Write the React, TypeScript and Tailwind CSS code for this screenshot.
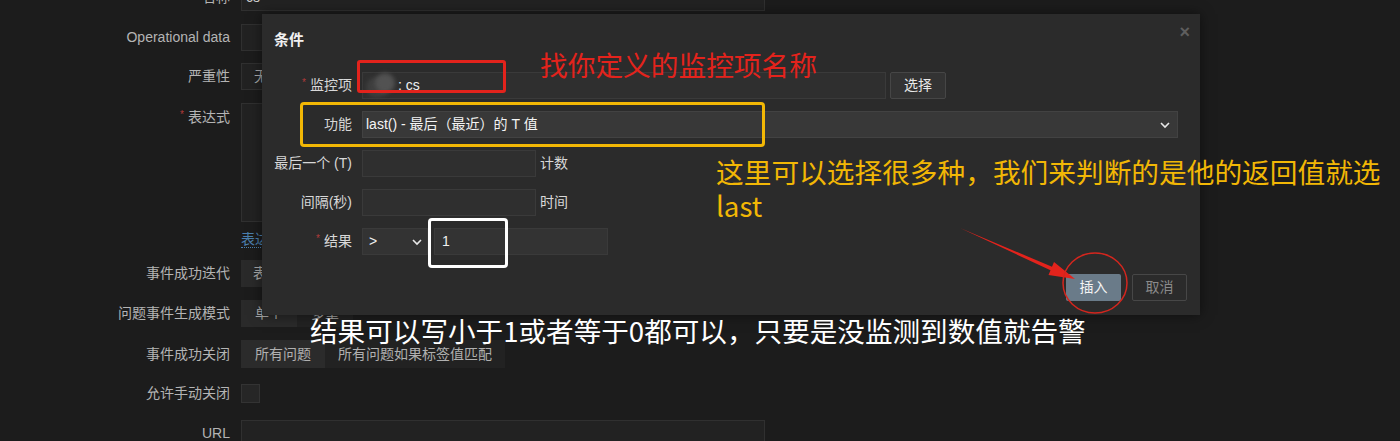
import type { ReactNode } from "react";

const FONT = "font-['Liberation_Sans','Noto_Sans_CJK_SC',sans-serif]";
const CJK = "font-['Noto_Sans_CJK_SC','Liberation_Sans',sans-serif]";

function FormRow({ label, required, children, className = "" }: { label: string; required?: boolean; children: ReactNode; className?: string }) {
  return (
    <div className={`flex items-center gap-[11px] ${className}`}>
      <div className="w-[230px] text-right text-[14px] text-[#b4b4b4] shrink-0">
        {required && <span className="text-[#b03a3a] text-[10px] mr-1 align-top">*</span>}
        {label}
      </div>
      {children}
    </div>
  );
}

function DialogRow({ label, required, children }: { label: string; required?: boolean; children: ReactNode }) {
  return (
    <div className="flex items-center gap-[10px] h-[27px]">
      <div className="w-[90px] text-right text-[14px] text-[#d8d8d8] shrink-0 whitespace-nowrap">
        {required && <span className="text-[#b03a3a] text-[10px] mr-1 align-top">*</span>}
        {label}
      </div>
      {children}
    </div>
  );
}

function Chevron() {
  return (
    <svg width="12" height="12" viewBox="0 0 12 12" className="shrink-0">
      <path d="M2 4 L6 8 L10 4" fill="none" stroke="#e8e8e8" strokeWidth="1.6" />
    </svg>
  );
}

export default function App() {
  return (
    <div className={`relative w-[1400px] h-[441px] overflow-hidden bg-[#1c1c1c] ${FONT}`}>
      {/* Background form */}
      <div className="flex flex-col">
        <FormRow label="名称" className="mt-[-16px]">
          <div className="w-[524px] h-[27px] bg-[#222] border border-[#303030] text-[14px] text-[#ccc] px-1 flex items-center">cs</div>
        </FormRow>
        <FormRow label="Operational data" className="mt-[13px]">
          <div className="w-[524px] h-[27px] bg-[#222] border border-[#303030]" />
        </FormRow>
        <FormRow label="严重性" className="mt-[12px]">
          <div className="w-[524px] h-[27px] bg-[#222] border border-[#303030] text-[14px] text-[#aaa] px-[12px] flex items-center">无</div>
        </FormRow>
        <div className="flex gap-[11px] mt-[13px]">
          <div className="w-[230px] text-right text-[14px] text-[#b4b4b4] pt-[4px]">
            <span className="text-[#b03a3a] text-[10px] mr-1 align-top">*</span>表达式
          </div>
          <div className="w-[524px] h-[119px] bg-[#222] border border-[#303030]" />
        </div>
        <div className="flex gap-[11px] mt-[10px] h-[16px] items-center">
          <div className="w-[230px]" />
          <span className="text-[14px] text-[#4b7fae] border-b border-dotted border-[#4b7fae] leading-[15px]">表达式构造器</span>
        </div>
        <FormRow label="事件成功迭代" className="mt-[12px]">
          <div className="flex h-[27px] text-[14px] text-[#aaa]">
            <div className="px-[12px] bg-[#2a2a2a] flex items-center">表达式</div>
            <div className="px-[12px] bg-[#222] flex items-center">恢复表达式</div>
          </div>
        </FormRow>
        <FormRow label="问题事件生成模式" className="mt-[13px]">
          <div className="flex h-[27px] text-[14px] text-[#aaa]">
            <div className="px-[14px] bg-[#2a2a2a] flex items-center">单个</div>
            <div className="px-[14px] bg-[#222] flex items-center">多重</div>
          </div>
        </FormRow>
        <FormRow label="事件成功关闭" className="mt-[13px]">
          <div className="flex h-[28px] text-[14px] text-[#b0b0b0]">
            <div className="w-[84px] bg-[#2b2b2b] flex items-center justify-center">所有问题</div>
            <div className="w-[180px] bg-[#222] flex items-center justify-center">所有问题如果标签值匹配</div>
          </div>
        </FormRow>
        <FormRow label="允许手动关闭" className="mt-[12px]">
          <div className="h-[27px] flex items-center">
            <div className="w-[19px] h-[19px] bg-[#262626] border border-[#333]" />
          </div>
        </FormRow>
        <FormRow label="URL" className="mt-[13px]">
          <div className="w-[524px] h-[27px] bg-[#222] border border-[#303030]" />
        </FormRow>
      </div>

      {/* Dialog */}
      <div className="absolute left-[262px] top-[14px] w-[938px] h-[301px] bg-[#2b2b2b] shadow-[0_0_12px_rgba(0,0,0,0.5)] flex flex-col">
        <div className="flex items-start justify-between pl-[12px] pr-[10px] pt-[15px] h-[58px]">
          <span className="text-[15px] font-bold text-[#f0f0f0]">条件</span>
          <span className="text-[18px] leading-[10px] font-bold text-[#5e5e5e] mt-[-2px]">×</span>
        </div>
        <div className="flex flex-col gap-[12px]">
          <DialogRow label="监控项" required>
            <div className="relative w-[524px] h-[27px] bg-[#2f2f2f] border border-[#3a3a3a] flex items-center text-[14px] text-[#f0f0f0]">
              <div className="relative ml-[3px] w-[30px] h-[25px]">
                <div className="absolute left-0 top-[4px] w-[22px] h-[20px] rounded-full bg-[#3f3f3f] blur-[2px]" />
                <div className="absolute left-[9px] top-0 w-[20px] h-[20px] rounded-full bg-[#525252] blur-[2px]" />
              </div>
              <span className="ml-[2px]">: cs</span>
            </div>
            <div className="w-[56px] h-[27px] ml-[-6px] bg-[#333] border border-[#464646] rounded-[2px] text-[14px] text-[#e8e8e8] flex items-center justify-center">选择</div>
          </DialogRow>
          <DialogRow label="功能">
            <div className="w-[816px] h-[27px] bg-[#383838] border border-[#424242] flex items-center justify-between pl-[3px] pr-[6px] text-[14px] text-[#f4f4f4]">
              <span>last() - 最后（最近）的 T 值</span>
              <Chevron />
            </div>
          </DialogRow>
          <DialogRow label="最后一个 (T)">
            <div className="w-[174px] h-[27px] bg-[#2f2f2f] border border-[#3a3a3a]" />
            <span className="ml-[-6px] text-[14px] text-[#d8d8d8]">计数</span>
          </DialogRow>
          <DialogRow label="间隔(秒)">
            <div className="w-[174px] h-[27px] bg-[#2f2f2f] border border-[#3a3a3a]" />
            <span className="ml-[-6px] text-[14px] text-[#d8d8d8]">时间</span>
          </DialogRow>
          <DialogRow label="结果" required>
            <div className="w-[66px] h-[27px] bg-[#333] border border-[#3a3a3a] flex items-center justify-between pl-[6px] pr-[4px] text-[14px] text-[#f0f0f0]">
              <span>&gt;</span>
              <Chevron />
            </div>
            <div className="w-[174px] h-[27px] ml-[-4px] bg-[#333] border border-[#3a3a3a] flex items-center px-[7px] text-[14px] text-[#f0f0f0]">1</div>
          </DialogRow>
        </div>
        <div className="flex justify-end gap-[11px] pr-[13px] mt-[19px]">
          <div className="w-[55px] h-[27px] bg-[#6a7b89] rounded-[2px] text-[14px] text-[#f4f4f4] flex items-center justify-center">插入</div>
          <div className="w-[55px] h-[27px] border border-[#474747] rounded-[2px] text-[14px] text-[#8a8a8a] flex items-center justify-center">取消</div>
        </div>
      </div>

      {/* Annotation boxes */}
      <div className="absolute left-[357px] top-[60px] w-[149px] h-[33px] border-[3px] border-[#e3231c] rounded-[3px]" />
      <div className="absolute left-[300px] top-[102px] w-[465px] h-[45px] border-[3px] border-[#f2b705] rounded-[4px]" />
      <div className="absolute left-[428px] top-[218px] w-[80px] h-[50px] border-[3px] border-white rounded-[4px]" />

      {/* Annotation texts */}
      <div className={`absolute left-[540px] top-[46px] text-[27.7px] leading-[36px] text-[#e3231c] ${CJK}`}>找你定义的监控项名称</div>
      <div className={`absolute left-[716px] top-[154px] text-[27.7px] leading-[34px] text-[#f2b705] whitespace-nowrap ${CJK}`}>
        这里可以选择很多种，我们来判断的是他的返回值就选
        <br />
        last
      </div>
      <div className={`absolute left-[310px] top-[312px] text-[27.6px] leading-[36px] text-white whitespace-nowrap ${CJK}`}>
        结果可以写小于1或者等于0都可以，只要是没监测到数值就告警
      </div>

      {/* Arrow and circle */}
      <svg className="absolute left-0 top-0 pointer-events-none" width="1400" height="441">
        <polygon points="960,228 1052,266.7 1054,262 1075,279 1048.5,275 1050.5,270.3" fill="#e3231c" />
        <ellipse cx="1095" cy="283" rx="32" ry="30" fill="none" stroke="#d4261e" strokeWidth="1.5" />
      </svg>
    </div>
  );
}
